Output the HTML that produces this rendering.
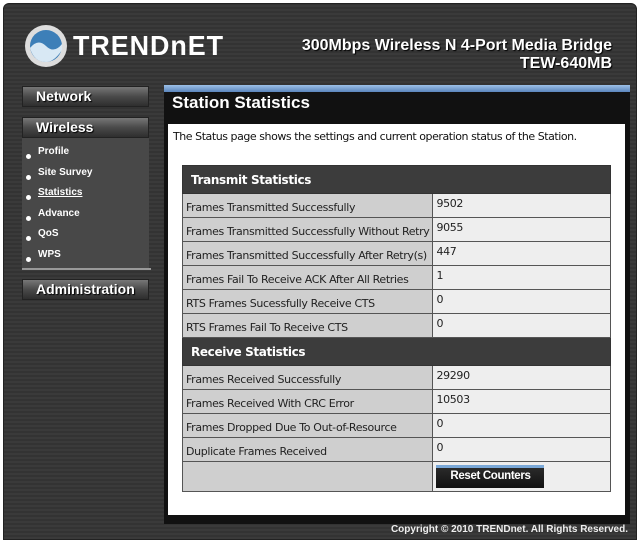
<!DOCTYPE html>
<html><head><style>
*{margin:0;padding:0;box-sizing:border-box}
body{width:640px;height:556px;background:#fff;position:relative;overflow:hidden;font-family:"Liberation Sans",sans-serif}
.outer{position:absolute;left:3px;top:3px;width:634px;height:537px;background:repeating-linear-gradient(0deg,#3a3a3a 0 2px,#333 2px 4px);border-radius:6px 6px 0 0;border:1px solid #222}
.abs{position:absolute}
.btn{position:absolute;left:22px;width:127px;height:21px;background:linear-gradient(#777,#4a4a4a 50%,#2e2e2e);border:1px solid #222;color:#fff;font-weight:bold;font-size:14px;padding-left:13px;line-height:19px;text-shadow:1px 1px 1px #000}
.sub{position:absolute;left:22px;top:138px;width:127px;height:130px;background:#484848}
.sub div{position:absolute;left:16px;color:#fff;font-size:10px;font-weight:bold}
.sub div:before{content:"";position:absolute;left:-12px;top:8px;width:5px;height:5px;border-radius:50%;background:#fff}
table{position:absolute;left:182px;top:165px;width:429px;border-collapse:collapse;font-family:"DejaVu Sans",sans-serif;font-size:11px;color:#222}
td{border:1px solid #555;height:24px;padding:3px 3px 0 3px;vertical-align:top;letter-spacing:-0.35px}
td.l{background:#cfcfcf;width:250px;padding-top:7px;white-space:nowrap}
td.r{background:#eee}
tr.h td{background:#3c3c3c;color:#fff;font-weight:bold;font-size:12px;height:28px;padding:7px 8px 0;border-color:#333}
</style></head><body>
<div class="outer"></div>
<svg class="abs" style="left:24px;top:24px" width="44" height="44" viewBox="0 0 44 44"><circle cx="22" cy="22" r="21" fill="#ddd"/><circle cx="22" cy="22" r="16" fill="#3d7fb8"/><path d="M6 24 Q14 14 22 22 T38 20 L38 26 Q30 38 22 38 Q10 38 6 24Z" fill="#d8e8f4"/></svg>
<div class="abs" style="left:73px;top:30px;color:#fff;font-size:28px;font-weight:bold;letter-spacing:1px;transform:scaleX(0.96);transform-origin:left">TRENDnET</div>
<div class="abs" style="right:28px;top:37px;color:#fff;font-size:16px;font-weight:bold;text-align:right;line-height:18px;text-shadow:1px 1px 1px #000">300Mbps Wireless N 4-Port Media Bridge<br>TEW-640MB</div>
<div class="btn" style="top:86px">Network</div>
<div class="btn" style="top:117px">Wireless</div>
<div class="sub"><div style="top:8px">Profile</div><div style="top:29px">Site Survey</div><div style="top:49px;text-decoration:underline">Statistics</div><div style="top:70px">Advance</div><div style="top:90px">QoS</div><div style="top:111px">WPS</div></div>
<div class="abs" style="left:22px;top:268px;width:129px;height:2px;background:#999"></div>
<div class="btn" style="top:279px">Administration</div>
<div class="abs" style="left:164px;top:85px;width:466px;height:439px;background:#111"></div>
<div class="abs" style="left:164px;top:85px;width:466px;height:7px;background:linear-gradient(#9cc0e8,#5b86bd)"></div>
<div class="abs" style="left:172px;top:93px;color:#fff;font-size:17px;font-weight:bold">Station Statistics</div>
<div class="abs" style="left:168px;top:124px;width:457px;height:391px;background:#fff"></div>
<div class="abs" style="left:173px;top:130px;font-family:'DejaVu Sans',sans-serif;font-size:11px;color:#111;letter-spacing:-0.45px">The Status page shows the settings and current operation status of the Station.</div>
<table>
<tr class="h"><td colspan="2">Transmit Statistics</td></tr>
<tr><td class="l">Frames Transmitted Successfully</td><td class="r">9502</td></tr>
<tr><td class="l">Frames Transmitted Successfully Without Retry</td><td class="r">9055</td></tr>
<tr><td class="l">Frames Transmitted Successfully After Retry(s)</td><td class="r">447</td></tr>
<tr><td class="l">Frames Fail To Receive ACK After All Retries</td><td class="r">1</td></tr>
<tr><td class="l">RTS Frames Sucessfully Receive CTS</td><td class="r">0</td></tr>
<tr><td class="l">RTS Frames Fail To Receive CTS</td><td class="r">0</td></tr>
<tr class="h"><td colspan="2">Receive Statistics</td></tr>
<tr><td class="l">Frames Received Successfully</td><td class="r">29290</td></tr>
<tr><td class="l">Frames Received With CRC Error</td><td class="r">10503</td></tr>
<tr><td class="l">Frames Dropped Due To Out-of-Resource</td><td class="r">0</td></tr>
<tr><td class="l">Duplicate Frames Received</td><td class="r">0</td></tr>
<tr><td class="l" style="height:30px"></td><td class="r" style="padding:3px 0 0 3px"><div style="width:108px;height:23px;background:linear-gradient(#7aa8d8 0 3px,#2a2a2a 3px,#111);color:#fff;font-weight:bold;font-size:11.5px;text-align:center;line-height:22px;font-family:'Liberation Sans',sans-serif">Reset Counters</div></td></tr>
</table>
<div class="abs" style="right:12px;top:524px;color:#eee;font-size:10px;font-weight:bold">Copyright © 2010 TRENDnet. All Rights Reserved.</div>
</body></html>
